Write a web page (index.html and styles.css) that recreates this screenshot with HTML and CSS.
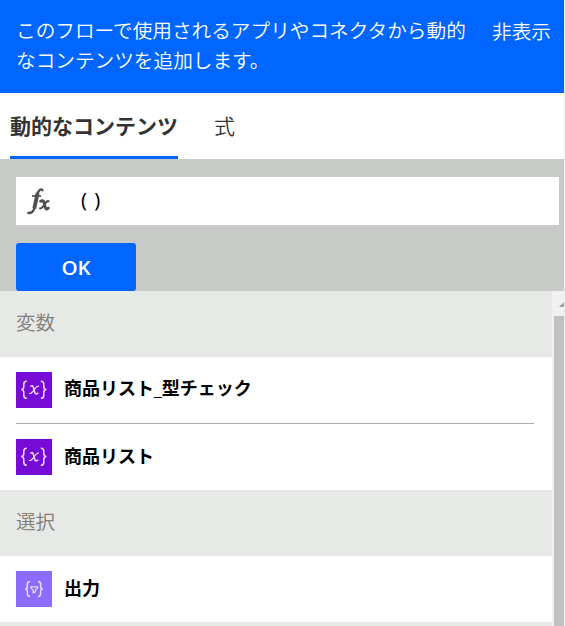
FILE: index.html
```html
<!DOCTYPE html>
<html lang="ja">
<head>
<meta charset="utf-8">
<title>動的なコンテンツ</title>
<link rel="stylesheet" href="styles.css">
</head>
<body>
<svg class="defs" aria-hidden="true">
  <symbol id="variable" viewBox="0 0 36 36">
    <g fill="none" stroke="currentColor" stroke-width="1.5">
      <path d="M10.8 9.2C8.2 9.2 7.8 10.3 7.8 12v2.6c0 2-.7 3-2.6 3 1.9 0 2.6 1 2.6 3v2.8c0 1.7.4 2.9 3 2.9"/>
      <path d="M24.8 9.2c2.6 0 3 1.1 3 2.8v2.6c0 2 .7 3 2.6 3-1.9 0-2.6 1-2.6 3v2.8c0 1.7-.4 2.9-3 2.9"/>
      <path d="M14.3 14.4c1.7-1 2.5-.8 3 .8l1.6 5.6c.5 1.7 1.7 1.7 3.4 0"/>
      <path d="M23 14.2c-1.7-.7-2.9.6-4.9 3.6-2 3-3.2 4.3-5 3.6" stroke-width="1.2"/>
    </g>
  </symbol>
  <symbol id="select" viewBox="0 0 36 36">
    <g fill="none" stroke="currentColor" stroke-width="1.4">
      <path d="M14 10.5c-2.2 0-2.6.9-2.6 2.5v2.3c0 1.7-.5 2.5-2.1 2.7 1.6.2 2.1 1 2.1 2.7V23c0 1.6.4 2.5 2.6 2.5"/>
      <path d="M22 10.5c2.2 0 2.6.9 2.6 2.5v2.3c0 1.7.5 2.5 2.1 2.7-1.6.2-2.1 1-2.1 2.7V23c0 1.6-.4 2.5-2.6 2.5"/>
      <path d="M14.8 15.8h6.8v1l-2.2 2.4v1.7l-2.2.9v-2.6l-2.4-2.4z" stroke-width="1.2"/>
    </g>
  </symbol>
  <symbol id="function" viewBox="0 0 36 36">
    <g fill="none" stroke="currentColor" stroke-linecap="round">
      <path d="M20.5 7.2c-.9-1.7-4-1-5.1 4.2l-2.8 13c-1 4.3-3.8 6.2-6.2 5.4" stroke-width="2.4"/>
      <path d="M15.6 10l-3.3 15.5" stroke-width="3.8" stroke-linecap="butt"/>
      <path d="M10 13h9" stroke-width="1.7" stroke-linecap="butt"/>
      <path d="M18.6 18.3c1.8-1 2.8-.8 3.3 1l1.5 5.5c.5 1.6 1.5 1.4 2.9.3" stroke-width="2.9"/>
      <path d="M26.7 18.2c-1.8-.5-2.9.8-4.4 3.4-1.6 2.8-2.7 4.4-4.3 3.7" stroke-width="2"/>
    </g>
  </symbol>
</svg>
<div class="panel">
  <header class="header">
    <p class="message">このフローで使用されるアプリやコネクタから動的<br>なコンテンツを追加します。</p>
    <a class="hide">非表示</a>
  </header>
  <nav class="tabs">
    <span class="tab active">動的なコンテンツ</span>
    <span class="tab">式</span>
  </nav>
  <section class="editor">
    <div class="formula"><svg class="fx"><use href="#function"/></svg><span class="value">( )</span></div>
    <button class="ok">OK</button>
  </section>
  <div class="content">
    <main class="list">
      <h2 class="group">変数</h2>
      <div class="item"><svg class="icon"><use href="#variable"/></svg><span class="label">商品リスト<span class="underscore">_</span>型チェック</span></div>
      <div class="rule"></div>
      <div class="item"><svg class="icon"><use href="#variable"/></svg><span class="label">商品リスト</span></div>
      <h2 class="group">選択</h2>
      <div class="item"><svg class="icon light"><use href="#select"/></svg><span class="label">出力</span></div>
      <div class="group"></div>
    </main>
    <div class="scrollbar"><div class="arrow"></div><div class="thumb"></div></div>
  </div>
</div>
</body>
</html>
```
FILE: styles.css
```css
* { box-sizing: border-box; }
body {
  margin: 0;
  height: 626px;
  overflow: hidden;
  background: #f0f0f0;
  font-family: "Noto Sans CJK JP", sans-serif;
}
.defs { display: none; }
.panel { width: 564px; height: 626px; display: flex; flex-direction: column; background: #fff; }
.header {
  height: 93px;
  flex: none;
  display: flex;
  justify-content: space-between;
  padding: 15px 13px 0 16px;
  background: #06f;
  color: #fff;
  font-size: 19.65px;
  line-height: 30px;
  font-weight: 350;
  white-space: nowrap;
}
.message { margin: 0; }
.hide { padding-top: 1px; }
.tabs {
  height: 66px;
  flex: none;
  display: flex;
  gap: 36px;
  padding-left: 10px;
  color: #333;
  font-size: 21px;
  line-height: 65px;
}
.tab { font-weight: 350; }
.tab.active { font-weight: 700; border-bottom: 3px solid #06f; }
.editor {
  height: 132px;
  flex: none;
  padding: 18px 5px 0 16px;
  background: #c8cac7;
}
.formula { height: 48px; display: flex; background: #fff; }
.fx {
  width: 36px;
  height: 36px;
  margin: 6px 23px 0 6px;
  color: #505050;
}
.value { font: 20px/46px "Noto Sans", sans-serif; color: #000; word-spacing: 2px; }
.ok {
  display: block;
  width: 120px;
  height: 48px;
  margin-top: 18px;
  padding: 0;
  border: 0;
  border-radius: 3px;
  background: #06f;
  color: #fff;
  font: 600 20.5px/49px "Open Sans", sans-serif;
}
.content { flex: 1; min-height: 0; display: flex; }
.list { width: 552px; overflow: hidden; }
.group {
  height: 66px;
  margin: 0;
  padding-left: 16px;
  background: #e7e9e6;
  color: #817d7a;
  font-size: 19.6px;
  line-height: 61px;
  font-weight: 350;
}
.item {
  height: 66px;
  display: flex;
  align-items: center;
  gap: 12px;
  padding-left: 16px;
  color: #000;
  font-size: 18px;
  line-height: 26px;
  font-weight: 700;
}
.label { margin-top: -5px; }
.item:first-of-type .label { margin-top: -6px; }
.underscore { font: 14px/1 "Liberation Sans", sans-serif; }
.icon { width: 36px; height: 36px; background: #770bd6; color: #efdcff; }
.icon.light { background: #8c6cff; color: #e8e0ff; }
.rule { width: 518px; height: 1px; margin-left: 16px; background: #aaa; }
.scrollbar { width: 12px; padding: 11px 0 0 2px; background: #f0f0f0; }
.arrow { height: 5px; margin-left: 5px; background: #a0a0a0; clip-path: polygon(100% 0, 100% 100%, 0 100%); }
.thumb { height: 319px; margin-top: 9px; background: #c1c1c1; }
```
